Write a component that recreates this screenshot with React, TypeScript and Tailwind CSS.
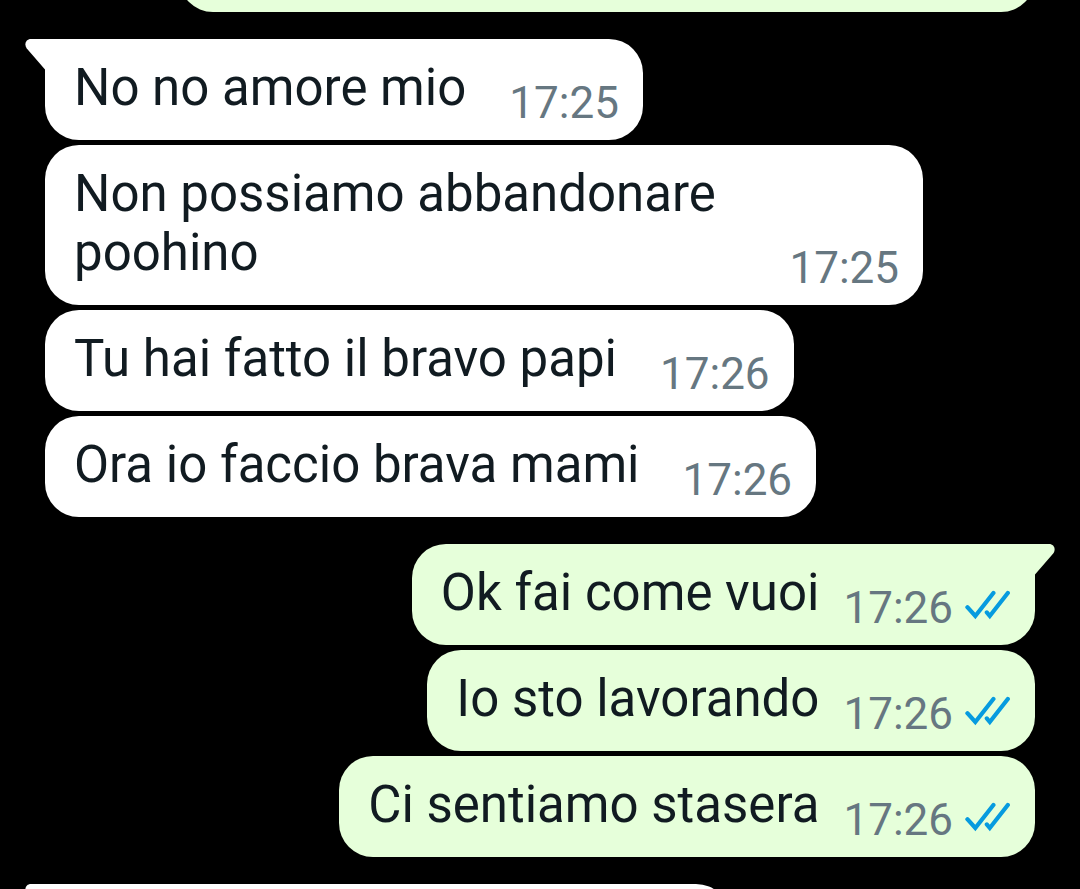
type Message = { text: string; time: string; outgoing?: boolean; tail?: boolean };

const messages: Message[] = [
  { text: "No no amore mio", time: "17:25", tail: true },
  { text: "Non possiamo abbandonare poohino", time: "17:25" },
  { text: "Tu hai fatto il bravo papi", time: "17:26" },
  { text: "Ora io faccio brava mami", time: "17:26" },
  { text: "Ok fai come vuoi", time: "17:26", outgoing: true, tail: true },
  { text: "Io sto lavorando", time: "17:26", outgoing: true },
  { text: "Ci sentiamo stasera", time: "17:26", outgoing: true },
];

function Tail({ outgoing }: { outgoing?: boolean }) {
  return (
    <svg
      viewBox="0 0 21 31"
      aria-hidden="true"
      className={
        outgoing
          ? "absolute -right-5 top-0 h-[31px] w-[21px] -scale-x-100 fill-[#e6ffda]"
          : "absolute -left-5 top-0 h-[31px] w-[21px] fill-white"
      }
    >
      <path d="M21 0H6C.8 0-1.2 5.4 1.8 9.4L20 30.5H21Z" />
    </svg>
  );
}

function ReadTicks() {
  return (
    <svg
      viewBox="0 0 46 30"
      role="img"
      aria-label="Read"
      className="mb-3 ml-3 h-[30px] w-[46px] fill-none stroke-[#069bdf]"
      strokeWidth="4.2"
      strokeLinecap="round"
    >
      <path d="M2.4 17.2L10.3 26L28.4 3M21.8 22.4L24.8 26L42.8 3" />
    </svg>
  );
}

function Bubble({ text, time, outgoing, tail }: Message) {
  return (
    <li
      className={`relative flex max-w-[878px] items-end rounded-[34px] pt-[19px] pb-[13px] pl-[29px] ${
        outgoing ? "self-end bg-[#e6ffda] pr-6" : "self-start bg-white pr-6"
      } ${tail ? (outgoing ? "mt-[22px] rounded-tr-none" : "mt-[22px] rounded-tl-none") : ""}`}
    >
      {tail && <Tail outgoing={outgoing} />}
      <p className="pb-[10px] text-[51px] leading-[59px] text-[#111b21]">{text}</p>
      <span className={`flex items-end text-[#667781] ${outgoing ? "ml-6" : "ml-[43px]"}`}>
        <time className="text-[44px] leading-[48px]">{time}</time>
        {outgoing && <ReadTicks />}
      </span>
    </li>
  );
}

export default function App() {
  return (
    <main className="h-screen overflow-hidden bg-black font-['Roboto',sans-serif]">
      {/* the list is scrolled, so the outer bubbles are only partly in view */}
      <ul className="-mt-[89px] flex flex-col gap-[5px] px-[45px]">
        <li className="h-[101px] w-[856px] max-w-full self-end rounded-[34px] bg-[#e6ffda]" />
        {messages.map((message) => (
          <Bubble key={message.text} {...message} />
        ))}
        <li className="relative mt-[22px] h-[101px] w-[685px] max-w-full rounded-[34px] rounded-tl-none bg-white">
          <Tail />
        </li>
      </ul>
    </main>
  );
}
